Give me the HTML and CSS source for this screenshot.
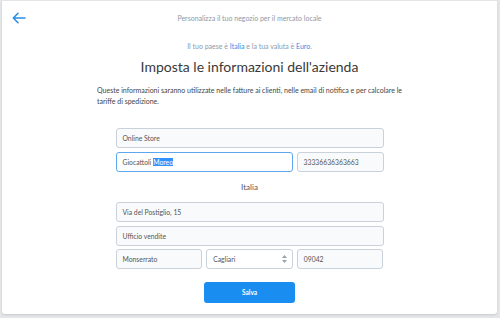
FILE: index.html
```html
<!DOCTYPE html>
<html lang="it">
<head>
    <meta charset="UTF-8">
    <meta name="viewport" content="width=device-width, initial-scale=1.0">
    <title>Imposta le informazioni dell'azienda</title>
    <link rel="stylesheet" href="styles.css">
</head>
<body>
    <div class="card">
        <div class="topbar">
            <a class="back" href="#">
                <svg width="14" height="12" viewBox="0 0 14 12" fill="none" stroke="#2d8ce8" stroke-width="1.6" stroke-linecap="round" stroke-linejoin="round">
                    <path d="M13 6H1.5M6 1.3L1.3 6 6 10.7"/>
                </svg>
            </a>
            <p class="step">Personalizza il tuo negozio per il mercato locale</p>
        </div>
        <p class="locale">Il tuo paese è <a href="#">Italia</a> e la tua valuta è <a href="#">Euro</a>.</p>
        <h1>Imposta le informazioni dell'azienda</h1>
        <p class="intro">Queste informazioni saranno utilizzate nelle fatture ai clienti, nelle email di notifica e per calcolare le tariffe di spedizione.</p>

        <form class="form">
            <div class="field">Online Store</div>
            <div class="row two">
                <div class="field focus">Giocattoli <span class="sel">Moreo</span></div>
                <div class="field">33336636363663</div>
            </div>
            <div class="country">Italia</div>
            <div class="field">Via del Postiglio, 15</div>
            <div class="field">Ufficio vendite</div>
            <div class="row three">
                <div class="field">Monserrato</div>
                <div class="field select">Cagliari
                    <svg width="5" height="8" viewBox="0 0 5 8" fill="#9aa3ad"><path d="M2.5 0L5 3H0zM2.5 8L0 5h5z"/></svg>
                </div>
                <div class="field">09042</div>
            </div>
            <button type="button" class="save">Salva</button>
        </form>
    </div>
</body>
</html>
```

FILE: styles.css
```css
* {
    margin: 0;
    padding: 0;
    box-sizing: border-box;
}
body {
    font-family: 'Lato', 'Noto Sans', sans-serif;
    background-color: #e3e5e9;
    color: #333;
    height: 318px;
    overflow: hidden;
}
.card {
    background-color: #fff;
    margin: 1px 3px 0 2px;
    height: 313px;
    border-radius: 0 0 3px 3px;
    box-shadow: 0 1px 2px rgba(0,0,0,0.12);
}
.topbar {
    position: relative;
    height: 36px;
    padding-top: 13px;
}
.back {
    position: absolute;
    left: 10px;
    top: 11px;
}
.back svg {
    display: block;
}
.step {
    text-align: center;
    font-size: 7px;
    color: #8d99a8;
}
.locale {
    text-align: center;
    font-size: 7px;
    color: #8d99a8;
    margin-top: 5px;
}
.locale a {
    color: #2d8ce8;
    text-decoration: none;
}
h1 {
    text-align: center;
    font-weight: 400;
    font-size: 14px;
    color: #3a3a3a;
    margin-top: 8px;
}
.intro {
    font-size: 7px;
    line-height: 11px;
    color: #444;
    margin: 10px 95px 0 95px;
}
.form {
    width: 268px;
    margin: 21px auto 0 auto;
    display: flex;
    flex-direction: column;
    gap: 4px;
}
.row {
    display: grid;
    gap: 4px;
}
.row.two {
    grid-template-columns: 177px 1fr;
}
.row.three {
    grid-template-columns: 1fr 1fr 1fr;
    margin-top: -1px;
}
.field {
    height: 20px;
    border: 1px solid #c9d1da;
    border-radius: 3px;
    background-color: #f9fafb;
    font-size: 6.8px;
    color: #555;
    padding-left: 6px;
    display: flex;
    align-items: center;
}
.field.focus {
    background-color: #fff;
    border-color: #5ba8f1;
}
.sel {
    background-color: #3390ff;
    color: #fff;
    margin-left: 2px;
}
.select {
    background-color: #fff;
    justify-content: space-between;
    padding-right: 5px;
}
.country {
    text-align: center;
    font-size: 8px;
    color: #555;
    margin: 6px 0 6px 0;
}
.save {
    align-self: center;
    width: 91px;
    height: 21px;
    margin-top: 9px;
    border: none;
    border-radius: 3px;
    background-color: #1a8ef0;
    color: #fff;
    font-family: inherit;
    font-size: 6.5px;
    font-weight: 700;
}
```
